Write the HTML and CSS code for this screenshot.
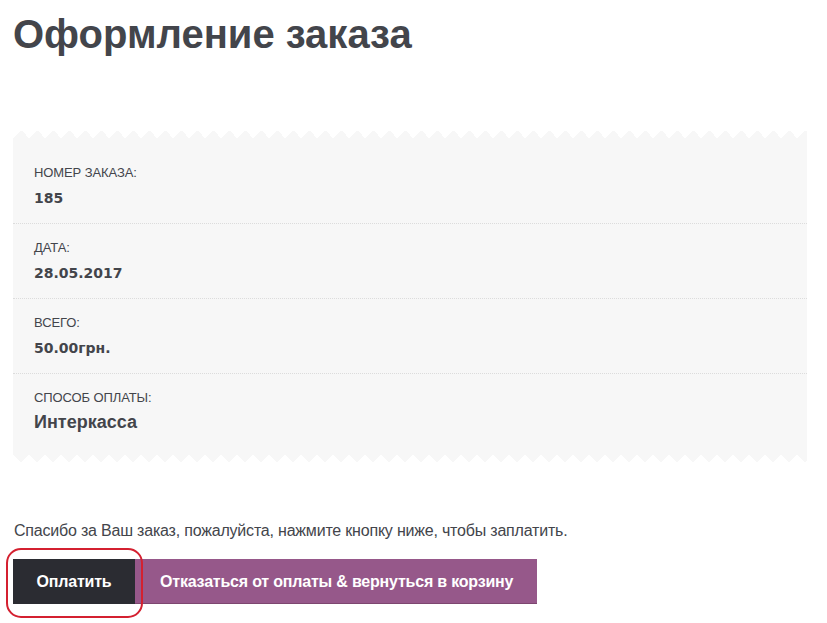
FILE: index.html
```html
<!DOCTYPE html>
<html lang="ru">
<head>
<meta charset="utf-8">
<title>Оформление заказа</title>
<link rel="stylesheet" href="styles.css">
</head>
<body>
<div class="page">
  <h1 class="title">Оформление заказа</h1>
  <ul class="order-details">
    <li class="row">
      <span class="label">Номер заказа:</span>
      <strong class="value">185</strong>
    </li>
    <li class="row">
      <span class="label">Дата:</span>
      <strong class="value">28.05.2017</strong>
    </li>
    <li class="row">
      <span class="label">Всего:</span>
      <strong class="value">50.00грн.</strong>
    </li>
    <li class="row row-last">
      <span class="label">Способ оплаты:</span>
      <strong class="value value-method">Интеркасса</strong>
    </li>
  </ul>
  <p class="thanks">Спасибо за Ваш заказ, пожалуйста, нажмите кнопку ниже, чтобы заплатить.</p>
  <div class="actions">
    <a class="btn btn-pay" href="#">Оплатить</a>
    <a class="btn btn-cancel" href="#">Отказаться от оплаты &amp; вернуться в корзину</a>
    <span class="highlight" aria-hidden="true"></span>
  </div>
</div>
</body>
</html>
```
FILE: styles.css
```css
html, body {
  margin: 0;
  padding: 0;
  background: #ffffff;
}

body {
  font-family: "Liberation Sans", Arial, sans-serif;
  color: #43454b;
}

.page {
  width: 794px;
  padding: 10px 0 40px 13px;
}

.title {
  margin: 0;
  font-size: 40px;
  line-height: 48px;
  font-weight: 700;
  color: #43454b;
}

.order-details {
  position: relative;
  list-style: none;
  margin: 80px 0 0 0;
  padding: 11px 0 0 0;
  background: #f7f7f7;
}

.order-details::before,
.order-details::after {
  content: "";
  position: absolute;
  left: 0;
  right: 0;
  height: 8px;
  background-repeat: repeat-x;
  background-size: 16px 8px;
}

.order-details::before {
  top: -8px;
  background-image: conic-gradient(from 135deg at 50% 0, #f7f7f7 90deg, transparent 0);
}

.order-details::after {
  bottom: -8px;
  background-image: conic-gradient(from -45deg at 50% 100%, #f7f7f7 90deg, transparent 0);
}

.row {
  display: flex;
  flex-direction: column;
  padding: 15px 21px 15px 21px;
  border-bottom: 1px dotted #dcdcdc;
}

.row-last {
  border-bottom: 0;
  padding-bottom: 21px;
}

.label {
  font-size: 13px;
  line-height: 18px;
  text-transform: uppercase;
  letter-spacing: -0.1px;
  color: #43454b;
}

.value {
  margin-top: 6px;
  font-family: "DejaVu Sans", sans-serif;
  font-weight: 700;
  font-size: 14px;
  line-height: 20px;
  color: #43454b;
}

.value-method {
  margin-top: 4px;
  font-family: "Liberation Sans", Arial, sans-serif;
  font-size: 18px;
  line-height: 22px;
}

.thanks {
  margin: 65px 0 0 1px;
  font-size: 16px;
  line-height: 24px;
  letter-spacing: -0.2px;
  color: #43454b;
}

.actions {
  position: relative;
  display: flex;
  margin-top: 16px;
}

.btn {
  display: block;
  height: 45px;
  line-height: 45px;
  font-size: 16px;
  font-weight: 700;
  color: #ffffff;
  text-decoration: none;
  letter-spacing: -0.2px;
}

.btn-pay {
  background: #2b2c32;
  padding: 0 23px;
  width: 76px;
  text-align: center;
}

.btn-cancel {
  background: #96588a;
  padding: 0 24px 0 25px;
  border-bottom: 1px solid #7d4670;
  height: 44px;
}

.highlight {
  position: absolute;
  left: -7px;
  top: -11px;
  width: 133px;
  height: 66px;
  border: 2px solid #d42030;
  border-radius: 15px;
}
```
